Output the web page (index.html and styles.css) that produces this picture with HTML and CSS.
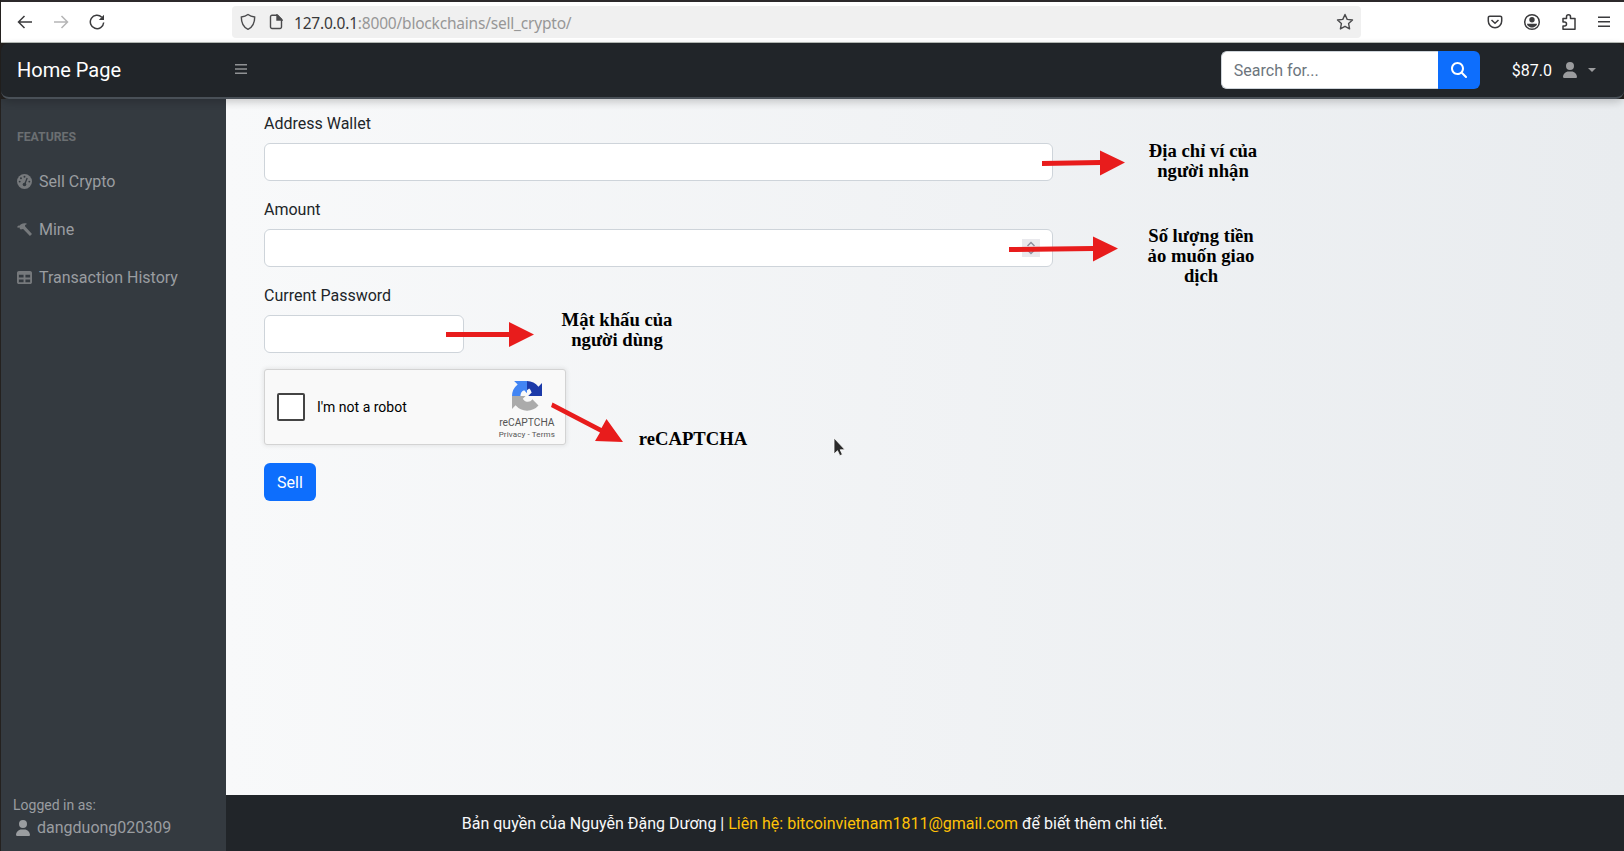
FILE: index.html
```html
<!DOCTYPE html>
<html lang="en">
<head>
<meta charset="utf-8">
<title>Sell Crypto</title>
<link rel="stylesheet" href="styles.css">
</head>
<body>
<div class="window">
  <div class="browser">
    <div class="browser-nav">
      <svg width="16" height="16" viewBox="0 0 16 16" class="stroke"><path d="M15 8H1.500M7.500 2L1.500 8l6 6"/></svg>
      <svg width="16" height="16" viewBox="0 0 16 16" class="stroke faded"><path d="M1 8h13.500M8.500 2l6 6-6 6"/></svg>
      <svg width="16" height="16" viewBox="0 0 16 16" class="stroke"><path d="M12.800 3.200A6.700 6.700 0 1 0 14.700 8.500"/><path d="M15 .8V6H9.800z" fill="#3b3b3d" stroke="none"/></svg>
    </div>
    <div class="url-bar">
      <svg width="16" height="18" viewBox="0 0 16 18" class="stroke thin"><path d="M8 1.500C6 3 3.800 3.700 1.300 4c0 5.500 1.500 10 6.700 12.300C13.200 14 14.700 9.500 14.700 4 12.200 3.700 10 3 8 1.500z"/></svg>
      <svg class="page-icon stroke thin" width="14" height="16" viewBox="0 0 14 16"><path d="M3 1.300h5.500l4 4V13a1.500 1.500 0 0 1-1.500 1.500H3A1.500 1.500 0 0 1 1.500 13V2.800A1.500 1.500 0 0 1 3 1.300z"/><path d="M8 1l5 5H8z" fill="#4b4b4d"/></svg>
      <span class="url"><span class="host">127.0.0.1</span><span class="path">:8000/blockchains/sell_crypto/</span></span>
      <svg class="star stroke thin" width="18" height="18" viewBox="0 0 18 18"><path d="M9 1.500l2.200 4.900 5.300.6-3.900 3.600 1 5.300L9 13.300l-4.600 2.600 1-5.300L1.500 7l5.300-.6z" stroke-linejoin="round"/></svg>
    </div>
    <div class="browser-tools">
      <svg width="16" height="16" viewBox="0 0 16 16" class="stroke"><path d="M2.800 2.200h10.400a1.500 1.500 0 0 1 1.500 1.500V7a6.700 6.700 0 0 1-13.400 0V3.700a1.500 1.500 0 0 1 1.500-1.500z"/><path d="M4.500 6L8 9.300 11.500 6"/></svg>
      <svg width="18" height="18" viewBox="0 0 18 18" class="stroke"><circle cx="9" cy="9" r="7.300"/><circle cx="9" cy="6.800" r="2.700" fill="#3b3b3d" stroke="none"/><path d="M4 10.800h10c0 2-2.500 3.700-5 3.700s-5-1.700-5-3.700z" fill="#3b3b3d" stroke="none"/></svg>
      <svg width="16" height="18" viewBox="0 0 16 18" class="stroke"><path d="M2 16.200V13h1.500a2 2 0 0 0 0-4H2V5.500h3.500V3.800a2 2 0 0 1 4 0v1.700H14v10.700z" stroke-linejoin="round"/></svg>
      <svg width="14" height="14" viewBox="0 0 14 14" class="stroke"><path d="M1 2.300h12M1 6.800h12M1 11.300h12"/></svg>
    </div>
  </div>

  <nav class="topbar">
    <a class="brand">Home Page</a>
    <svg class="toggle" width="12" height="12" viewBox="0 0 12 12"><path d="M0 1.700h12M0 6h12M0 10.300h12" stroke="#909294" stroke-width="1.500"/></svg>
    <div class="search">
      <div class="search-input">Search for...</div>
      <div class="search-button">
        <svg width="16" height="16" viewBox="0 0 512 512" fill="#fff"><path d="M416 208c0 45.900-14.900 88.300-40 122.700L502.600 457.400c12.500 12.500 12.500 32.800 0 45.300s-32.800 12.500-45.300 0L330.700 376c-34.400 25.200-76.800 40-122.700 40C93.100 416 0 322.900 0 208S93.100 0 208 0S416 93.100 416 208zM208 352a144 144 0 1 0 0-288 144 144 0 1 0 0 288z"/></svg>
      </div>
    </div>
    <div class="account">
      <span>$87.0</span>
      <svg width="14" height="16" viewBox="0 0 448 512" fill="#9b9c9e"><path d="M224 256A128 128 0 1 0 224 0a128 128 0 1 0 0 256zm-45.700 48C79.800 304 0 383.800 0 482.300C0 498.700 13.300 512 29.700 512H418.300c16.400 0 29.700-13.300 29.700-29.700C448 383.800 368.200 304 269.700 304H178.300z"/></svg>
      <i class="caret"></i>
    </div>
  </nav>

  <div class="layout">
    <aside class="sidebar">
      <div class="heading">Features</div>
      <a class="nav-link"><svg width="15" height="15" viewBox="0 0 14 14"><circle cx="7" cy="7" r="7" fill="#76797c"/><g fill="#343a40"><circle cx="7" cy="2.500" r=".9"/><circle cx="3.700" cy="3.900" r=".9"/><circle cx="2.500" cy="7.100" r=".9"/><circle cx="11.500" cy="7.100" r=".9"/><circle cx="7" cy="9.800" r="1.700"/></g><path d="M7.200 9.500L9.500 3.700" stroke="#343a40" stroke-width="1.200"/></svg>Sell Crypto</a>
      <a class="nav-link"><svg width="15" height="15" viewBox="0 0 14 14" fill="#76797c"><path d="M0 4.700L1.400 3.300l.8.100C3.500 1.700 5.500.8 9 1.300v.8l-1.500.7.1 1.500 6.400 6.800-1.900 2L5.700 6.600l-1.400.1-.4.300-.5-.1-1-1.100v-.6l-.7-.2-.5.600z"/></svg>Mine</a>
      <a class="nav-link"><svg width="15" height="15" viewBox="0 0 512 512" fill="#76797c"><path fill-rule="evenodd" d="M64 256V160H224v96H64zm0 64H224v96H64V320zm224 96V320H448v96H288zM448 256H288V160H448v96zM64 32C28.700 32 0 60.700 0 96V416c0 35.300 28.700 64 64 64H448c35.300 0 64-28.700 64-64V96c0-35.300-28.700-64-64-64H64z"/></svg>Transaction History</a>
      <div class="logged">
        <div class="small">Logged in as:</div>
        <div class="user"><svg width="14" height="16" viewBox="0 0 448 512" fill="#9a9da0"><path d="M224 256A128 128 0 1 0 224 0a128 128 0 1 0 0 256zm-45.700 48C79.800 304 0 383.800 0 482.300C0 498.700 13.300 512 29.700 512H418.300c16.400 0 29.700-13.300 29.700-29.700C448 383.800 368.200 304 269.700 304H178.300z"/></svg>dangduong020309</div>
      </div>
    </aside>

    <div class="content">
      <main class="form">
        <div class="label">Address Wallet</div>
        <div class="field"></div>
        <div class="label">Amount</div>
        <div class="field number"><span class="spinner"><svg width="18" height="18" viewBox="0 0 18 18"><path d="M5.500 7L9 3.500 12.500 7M5.500 11L9 14.500 12.500 11" fill="none" stroke="#8f8f9d" stroke-width="1.500"/></svg></span></div>
        <div class="label">Current Password</div>
        <div class="field short"></div>
        <div class="captcha">
          <span class="checkbox"></span>
          <span class="robot">I'm not a robot</span>
          <div class="captcha-brand">
            <svg width="30" height="30" viewBox="0 0 64 64">
              <path fill="#1c3aa9" d="M64 32V4.500l-7.600 7.600A32 32 0 0 0 32 0v19.500l4.500-3.300c3 1.800 4 6 5.500 8.300l-7.500 7.500z"/>
              <path fill="#4285f4" d="M32 0H4.500l7.600 7.600A32 32 0 0 0 0 32h18c0-7 3-11 8-12.500L32 26z"/>
              <path fill="#ababab" d="M0 32v27.500l7.600-7.600A32 32 0 0 0 56.500 52L43.500 39c-3 5-9 6.500-14 4.500-3-1-5-3-6.500-5.500L29 32z"/>
            </svg>
            <span class="captcha-name">reCAPTCHA</span>
            <span class="captcha-links">Privacy - Terms</span>
          </div>
        </div>
        <a class="button">Sell</a>
      </main>
      <footer class="footer"><span>Bản quyền của Nguyễn Đặng Dương | <b>Liên hệ: bitcoinvietnam1811@gmail.com</b> để biết thêm chi tiết.</span></footer>
    </div>
  </div>

  <svg class="arrows" width="1624" height="851" viewBox="0 0 1624 851" fill="#e81c1c">
    <path d="M1042 161l58-1v-9.500l25 12-25 13V165l-58 1z"/>
    <path d="M1009 247l84-1v-9.500l25 12-25 13V251l-84 1z"/>
    <path d="M446 332h63v-10l25 12.500-25 12.500v-10h-63z"/>
    <path d="M552.500 402.500l49 25.500 5-9 16.500 23-28-1 5-8.500-49-25.500z"/>
    <path d="M834 438v16l3.500-3.300 2.300 5 2.600-1.200-2.200-4.700h4.800z" fill="#2b2b2b" stroke="#fff" stroke-width=".8"/>
  </svg>
  <div class="note note-address">Địa chỉ ví của<br>người nhận</div>
  <div class="note note-amount">Số lượng tiền<br>ảo muốn giao<br>dịch</div>
  <div class="note note-password">Mật khấu của<br>người dùng</div>
  <div class="note note-captcha">reCAPTCHA</div>
</div>
</body>
</html>
```
FILE: styles.css
```css
* { box-sizing: border-box; }
body { margin: 0; background: #24211f; font-family: Roboto, sans-serif; font-size: 16px; line-height: 24px; color: #212529; }
svg { display: block; flex: none; }
.window { position: relative; display: flex; flex-direction: column; width: 1624px; height: 851px; padding-left: 1px; overflow: hidden; }

.browser { display: flex; align-items: center; height: 43px; border-top: 2px solid #2c292b; border-bottom: 1px solid #b9beb9; background: #fff; }
.stroke { fill: none; stroke: #3b3b3d; stroke-width: 1.5; }
.thin { stroke: #4b4b4d; stroke-width: 1.4; }
.faded { stroke: #b5b5b6; }
.browser-nav { display: flex; gap: 20px; width: 231px; padding-left: 16px; }
.url-bar { display: flex; align-items: center; width: 1129px; height: 32px; padding: 0 7px 0 8px; border-radius: 4px; background: #f0f0f0; }
.page-icon { margin-left: 13px; }
.url { margin-left: 11px; padding-top: 1px; font-family: "Noto Sans", sans-serif; font-size: 15.5px; letter-spacing: -.2px; white-space: nowrap; }
.host { color: #38383a; }
.path { color: #979797; }
.star { margin-left: auto; }
.browser-tools { display: flex; align-items: center; gap: 20px; margin-left: auto; padding-right: 13px; }

.topbar { position: relative; z-index: 2; display: flex; align-items: center; height: 56px; padding: 0 28px 0 16px; border-bottom: 2px solid #495057; border-radius: 8px; background: #212529; box-shadow: 0 3px 8px rgba(0, 0, 0, .2); }
.brand { width: 218px; color: #fff; font-size: 20px; line-height: 30px; }
.toggle { margin-bottom: 2px; }
.search { display: flex; margin-left: auto; height: 38px; }
.search-input { width: 217px; padding: 7px 12px 5px; border: 1px solid #ced4da; border-right: 0; border-radius: 6px 0 0 6px; background: #fff; color: #6c757d; }
.search-button { display: flex; align-items: center; justify-content: center; width: 42px; border-radius: 0 6px 6px 0; background: #0d6efd; }
.account { display: flex; align-items: center; margin-left: 32px; color: #fff; }
.account span { padding-top: 2px; }
.account svg { margin: 0 11px; }
.caret { border: 4px solid transparent; border-top-color: #9b9c9e; border-bottom: 0; }

.layout { display: flex; flex: 1; min-height: 0; }
.sidebar { display: flex; flex-direction: column; width: 225px; background: #343a40; color: #9a9da0; }
.heading { padding: 29px 16px 12px; color: #6b6f72; font-size: 12.25px; font-weight: 700; line-height: 18px; text-transform: uppercase; }
.nav-link { display: flex; align-items: center; gap: 7px; height: 48px; padding-left: 16px; }
.nav-link svg { margin-bottom: 2px; }
.logged { margin-top: auto; padding: 0 12px 11px; }
.small { font-size: 14px; line-height: 21px; }
.user { display: flex; align-items: center; gap: 7px; padding-left: 3px; }

.content { display: flex; flex: 1; flex-direction: column; background: linear-gradient(to right, #f8f9fa, #e9ecef); }
.form { display: flex; flex: 1; flex-direction: column; align-items: flex-start; padding: 12px 38px; }
.label { margin-bottom: 6px; line-height: 26px; }
.field { display: flex; width: 789px; height: 38px; margin-bottom: 16px; border: 1px solid #ced4da; border-radius: 6px; background: #fff; }
.number { align-items: center; justify-content: flex-end; padding-right: 12px; }
.spinner { background: #e9e9ed; }
.short { width: 200px; }
.captcha { display: flex; align-items: center; width: 302px; height: 76px; margin-bottom: 18px; padding: 0 10px 0 12px; border: 1px solid #d3d3d3; border-radius: 3px; background: #f9f9f9; box-shadow: 0 0 4px 1px rgba(0, 0, 0, .08); color: #000; }
.checkbox { width: 28px; height: 28px; border: 2px solid #444; border-radius: 2px; background: #fff; }
.robot { margin-left: 12px; font-size: 14px; }
.captcha-brand { display: flex; flex-direction: column; align-items: center; margin-left: auto; padding-top: 7px; color: #555; }
.captcha-name { font-size: 10.25px; line-height: 10px; margin-top: 7px; }
.captcha-links { font-size: 8px; line-height: 10px; letter-spacing: .13px; margin-top: 2px; }
.button { height: 38px; padding: 8px 13px 6px; border-radius: 6px; background: #0d6efd; color: #fff; }
.footer { display: flex; align-items: center; justify-content: center; height: 56px; padding-top: 2px; background: #212529; color: #f8f9fa; }
.footer span { margin-right: 221px; }
.footer b { color: #ffc107; font-weight: 400; }

.arrows { position: absolute; z-index: 3; left: 0; top: 0; }
.note { position: absolute; z-index: 3; width: 140px; color: #000; font: bold 18.67px/20px "Liberation Serif", serif; text-align: center; white-space: nowrap; }
.note-address { left: 1133px; top: 141px; }
.note-amount { left: 1131px; top: 226px; }
.note-password { left: 547px; top: 310px; }
.note-captcha { left: 623px; top: 429px; }
```
